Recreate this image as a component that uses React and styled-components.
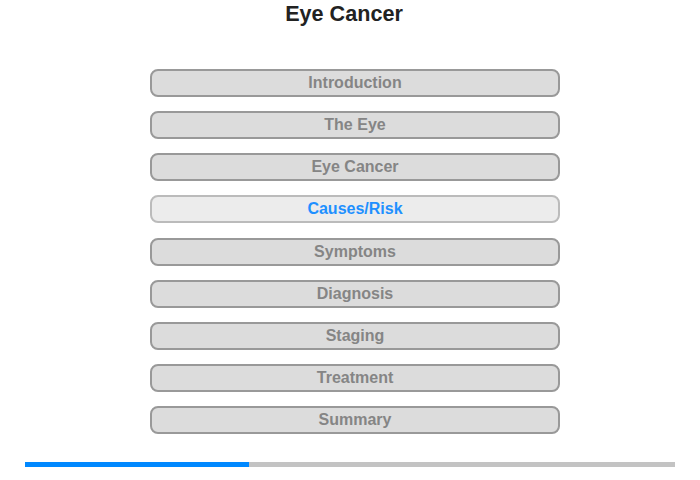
import React from 'react';
import styled, { createGlobalStyle } from 'styled-components';

const GlobalStyle = createGlobalStyle`
  body {
    margin: 0;
    background: #fff;
    font-family: "Liberation Sans", Arial, sans-serif;
  }
`;

const Page = styled.div`
  width: 700px;
  height: 480px;
  display: flex;
  flex-direction: column;
  align-items: center;
`;

const Title = styled.h1`
  margin: 0 12px 0 0;
  font-size: 21.6px;
  line-height: 28px;
  font-weight: bold;
  color: #222;
`;

const Menu = styled.nav`
  margin: 41px 0 0 10px;
  display: flex;
  flex-direction: column;
  gap: 14.125px;
`;

const MenuButton = styled.div`
  box-sizing: border-box;
  width: 410px;
  height: 28px;
  border: 2px solid ${(p) => (p.active ? '#bbb' : '#999')};
  border-radius: 8px;
  background: ${(p) => (p.active ? '#ececec' : '#dcdcdc')};
  color: ${(p) => (p.active ? '#1e90ff' : '#858585')};
  font-size: 16px;
  font-weight: bold;
  display: flex;
  align-items: center;
  justify-content: center;
`;

const Progress = styled.div`
  margin-top: 28px;
  width: 650px;
  height: 5px;
  background: #c3c3c3;
  display: flex;
`;

const ProgressFill = styled.div`
  height: 100%;
  background: #0088ff;
`;

const items = [
  'Introduction',
  'The Eye',
  'Eye Cancer',
  'Causes/Risk',
  'Symptoms',
  'Diagnosis',
  'Staging',
  'Treatment',
  'Summary',
];

const App = () => (
  <Page>
    <GlobalStyle />
    <Title>Eye Cancer</Title>
    <Menu>
      {items.map((item) => (
        <MenuButton key={item} active={item === 'Causes/Risk'}>
          {item}
        </MenuButton>
      ))}
    </Menu>
    <Progress>
      <ProgressFill style={{ width: `${(224 / 650) * 100}%` }} />
    </Progress>
  </Page>
);

export default App;
